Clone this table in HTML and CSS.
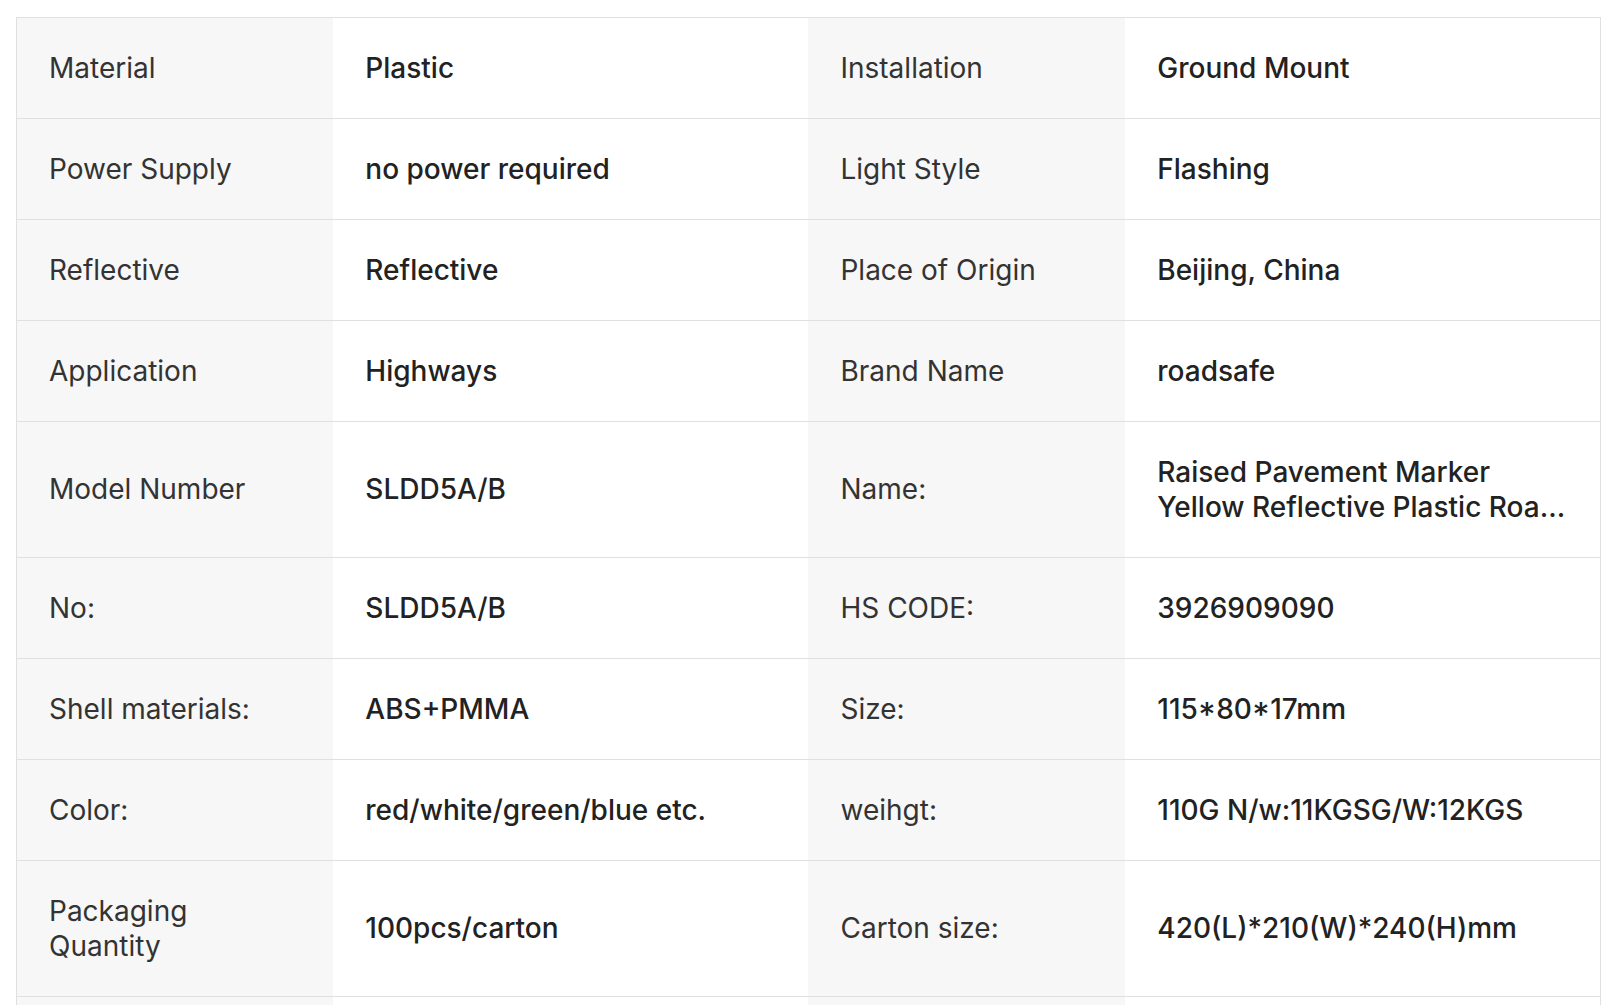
FILE: index.html
```html
<!DOCTYPE html>
<html lang="en">
<head>
  <meta charset="UTF-8">
  <meta name="viewport" content="width=device-width, initial-scale=1.0">
  <title>Product Attributes</title>
  <link rel="stylesheet" href="styles.css">
</head>
<body>
<div class="attrs">
  <table class="attr-table">
    <colgroup>
      <col class="col-label">
      <col class="col-value">
      <col class="col-label">
      <col class="col-value">
    </colgroup>
    <tbody>
      <tr>
        <td class="label">Material</td>
        <td class="value">Plastic</td>
        <td class="label">Installation</td>
        <td class="value">Ground Mount</td>
      </tr>
      <tr>
        <td class="label">Power Supply</td>
        <td class="value">no power required</td>
        <td class="label">Light Style</td>
        <td class="value">Flashing</td>
      </tr>
      <tr>
        <td class="label">Reflective</td>
        <td class="value">Reflective</td>
        <td class="label">Place of Origin</td>
        <td class="value">Beijing, China</td>
      </tr>
      <tr>
        <td class="label">Application</td>
        <td class="value">Highways</td>
        <td class="label">Brand Name</td>
        <td class="value">roadsafe</td>
      </tr>
      <tr>
        <td class="label">Model Number</td>
        <td class="value">SLDD5A/B</td>
        <td class="label">Name:</td>
        <td class="value"><div class="clamp">Raised Pavement Marker Yellow Reflective Plastic Road Stud Cat Eye</div></td>
      </tr>
      <tr>
        <td class="label">No:</td>
        <td class="value">SLDD5A/B</td>
        <td class="label">HS CODE:</td>
        <td class="value">3926909090</td>
      </tr>
      <tr>
        <td class="label">Shell materials:</td>
        <td class="value">ABS+PMMA</td>
        <td class="label">Size:</td>
        <td class="value">115*80*17mm</td>
      </tr>
      <tr>
        <td class="label">Color:</td>
        <td class="value">red/white/green/blue etc.</td>
        <td class="label">weihgt:</td>
        <td class="value">110G N/w:11KGSG/W:12KGS</td>
      </tr>
      <tr>
        <td class="label">Packaging Quantity</td>
        <td class="value">100pcs/carton</td>
        <td class="label">Carton size:</td>
        <td class="value">420(L)*210(W)*240(H)mm</td>
      </tr>
      <tr>
        <td class="label">Supply Ability</td>
        <td class="value">100000 pcs/month</td>
        <td class="label">Port</td>
        <td class="value">Tianjin</td>
      </tr>
    </tbody>
  </table>
</div>
</body>
</html>
```

FILE: styles.css
```css
body {
  font-family: Inter, "Noto Sans", "Liberation Sans", sans-serif;
  margin: 0;
  padding: 0;
  background: #fff;
  color: #222;
}

.attrs {
  padding: 17px 12px 0 16px;
}

.attr-table {
  width: 1585px;
  table-layout: fixed;
  border-collapse: collapse;
  border: 1px solid #e0e0e0;
  font-size: 28px;
  line-height: 35px;
}

.col-label {
  width: 20%;
}

.col-value {
  width: 30%;
}

.attr-table tr {
  border-bottom: 1px solid #e0e0e0;
}

.attr-table td {
  padding: 32.5px 32px;
  vertical-align: middle;
  word-wrap: break-word;
}

.label {
  background: #f7f7f7;
  color: #333;
  font-weight: 400;
}

.value {
  background: #fff;
  color: #222;
  font-weight: 500;
}

.clamp {
  display: -webkit-box;
  -webkit-line-clamp: 2;
  -webkit-box-orient: vertical;
  overflow: hidden;
}
```
